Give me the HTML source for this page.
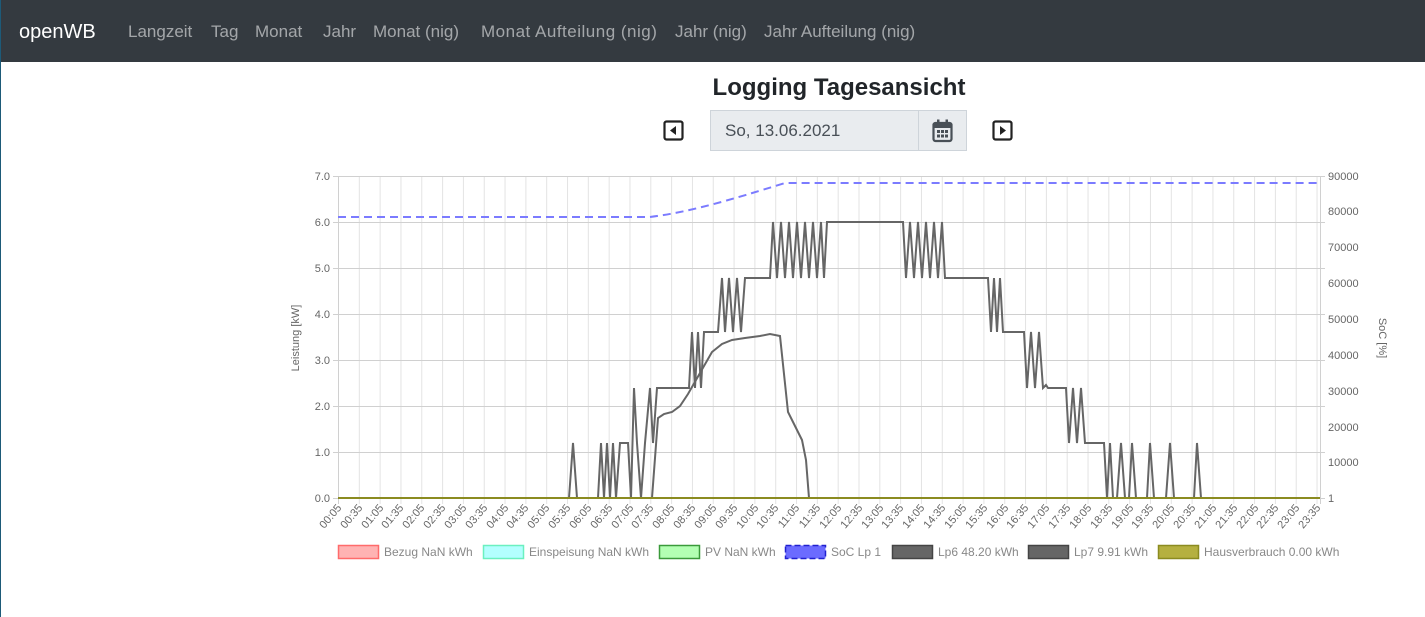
<!DOCTYPE html>
<html><head><meta charset="utf-8"><style>
body{margin:0;width:1425px;height:617px;overflow:hidden;background:#fff;font-family:"Liberation Sans",sans-serif;position:relative}
.lb{position:absolute;left:0;top:0;width:1px;height:617px;background:#1d5a78}
.nav{position:absolute;left:0;top:0;width:1425px;height:62px;background:#343a40}
.nav span{position:absolute;top:22px;font-size:17px;color:rgba(255,255,255,.55)}
.nav .b{font-size:20px;color:#fff;top:21px}
h1{position:absolute;left:0;width:1678px;text-align:center;top:74px;margin:0;font-size:24px;font-weight:bold;color:#212529}
.date{position:absolute;left:710px;top:110px;width:257px;height:41px;box-sizing:border-box;border:1px solid #ced4da;background:#e9ecef}
.date span{position:absolute;left:14px;top:10px;font-size:17px;color:#495057}
.date i{position:absolute;left:207px;top:0;width:1px;height:39px;background:#ced4da}
</style></head><body>
<div class="nav">
<span class="b" style="left:19px">openWB</span>
<span style="left:128px">Langzeit</span><span style="left:211px">Tag</span><span style="left:255px">Monat</span><span style="left:323px">Jahr</span><span style="left:373px">Monat (nig)</span><span style="left:481px;letter-spacing:0.5px">Monat Aufteilung (nig)</span><span style="left:675px">Jahr (nig)</span><span style="left:764px">Jahr Aufteilung (nig)</span>
</div>
<div class="lb"></div>
<h1>Logging Tagesansicht</h1>
<svg style="position:absolute;left:663px;top:120px" width="21" height="21"><rect x="1.5" y="1.5" width="18" height="18" rx="2" fill="none" stroke="#222" stroke-width="2.2"/><path d="M13 6v9l-6-4.5z" fill="#222"/></svg>
<svg style="position:absolute;left:992px;top:120px" width="21" height="21"><rect x="1.5" y="1.5" width="18" height="18" rx="2" fill="none" stroke="#222" stroke-width="2.2"/><path d="M8 6v9l6-4.5z" fill="#222"/></svg>
<div class="date"><span>So, 13.06.2021</span><i></i>
<svg style="position:absolute;left:221px;top:8px" width="21" height="24"><rect x="1.5" y="4" width="18" height="18" rx="2" fill="none" stroke="#495057" stroke-width="2.2"/><rect x="1.5" y="4" width="18" height="5" fill="#495057"/><rect x="5" y="0.5" width="2.5" height="5" fill="#495057"/><rect x="13.5" y="0.5" width="2.5" height="5" fill="#495057"/><g fill="#495057"><rect x="5" y="11" width="3" height="3"/><rect x="9" y="11" width="3" height="3"/><rect x="13" y="11" width="3" height="3"/><rect x="5" y="15.5" width="3" height="3"/><rect x="9" y="15.5" width="3" height="3"/><rect x="13" y="15.5" width="3" height="3"/></g></svg>
</div>
<svg style="position:absolute;left:0;top:0" width="1425" height="617" font-family="Liberation Sans, sans-serif" font-size="11" fill="#666">
<defs><pattern id="vg" x="338" y="0" width="20.82" height="617" patternUnits="userSpaceOnUse"><line x1="0.5" y1="0" x2="0.5" y2="617" stroke="#e3e3e3"/></pattern></defs>
<rect x="338" y="176" width="982" height="328" fill="url(#vg)"/>
<g stroke="#d0d0d0"><line x1="333" y1="176.5" x2="1325" y2="176.5"/><line x1="333" y1="222.5" x2="1325" y2="222.5"/><line x1="333" y1="268.5" x2="1325" y2="268.5"/><line x1="333" y1="314.5" x2="1325" y2="314.5"/><line x1="333" y1="360.5" x2="1325" y2="360.5"/><line x1="333" y1="406.5" x2="1325" y2="406.5"/><line x1="333" y1="452.5" x2="1325" y2="452.5"/><line x1="333" y1="498.5" x2="1325" y2="498.5"/><line x1="338.5" y1="176" x2="338.5" y2="504"/><line x1="1320.5" y1="176" x2="1320.5" y2="504"/></g>
<g text-anchor="end"><text x="330" y="180">7.0</text><text x="330" y="226">6.0</text><text x="330" y="272">5.0</text><text x="330" y="318">4.0</text><text x="330" y="364">3.0</text><text x="330" y="410">2.0</text><text x="330" y="456">1.0</text><text x="330" y="502">0.0</text></g>
<g><text x="1328" y="180">90000</text><text x="1328" y="215">80000</text><text x="1328" y="251">70000</text><text x="1328" y="287">60000</text><text x="1328" y="323">50000</text><text x="1328" y="359">40000</text><text x="1328" y="395">30000</text><text x="1328" y="431">20000</text><text x="1328" y="466">10000</text><text x="1328" y="502">1</text></g>
<text transform="translate(299,338) rotate(-90)" text-anchor="middle">Leistung [kW]</text>
<text transform="translate(1379,338) rotate(90)" text-anchor="middle">SoC [%]</text>
<g text-anchor="end" font-size="11">
<text transform="translate(342,508) rotate(-50)">00:05</text><text transform="translate(363,508) rotate(-50)">00:35</text><text transform="translate(384,508) rotate(-50)">01:05</text><text transform="translate(404,508) rotate(-50)">01:35</text><text transform="translate(425,508) rotate(-50)">02:05</text><text transform="translate(446,508) rotate(-50)">02:35</text><text transform="translate(467,508) rotate(-50)">03:05</text><text transform="translate(488,508) rotate(-50)">03:35</text><text transform="translate(509,508) rotate(-50)">04:05</text><text transform="translate(529,508) rotate(-50)">04:35</text><text transform="translate(550,508) rotate(-50)">05:05</text><text transform="translate(571,508) rotate(-50)">05:35</text><text transform="translate(592,508) rotate(-50)">06:05</text><text transform="translate(613,508) rotate(-50)">06:35</text><text transform="translate(634,508) rotate(-50)">07:05</text><text transform="translate(654,508) rotate(-50)">07:35</text><text transform="translate(675,508) rotate(-50)">08:05</text><text transform="translate(696,508) rotate(-50)">08:35</text><text transform="translate(717,508) rotate(-50)">09:05</text><text transform="translate(738,508) rotate(-50)">09:35</text><text transform="translate(759,508) rotate(-50)">10:05</text><text transform="translate(779,508) rotate(-50)">10:35</text><text transform="translate(800,508) rotate(-50)">11:05</text><text transform="translate(821,508) rotate(-50)">11:35</text><text transform="translate(842,508) rotate(-50)">12:05</text><text transform="translate(863,508) rotate(-50)">12:35</text><text transform="translate(884,508) rotate(-50)">13:05</text><text transform="translate(904,508) rotate(-50)">13:35</text><text transform="translate(925,508) rotate(-50)">14:05</text><text transform="translate(946,508) rotate(-50)">14:35</text><text transform="translate(967,508) rotate(-50)">15:05</text><text transform="translate(988,508) rotate(-50)">15:35</text><text transform="translate(1009,508) rotate(-50)">16:05</text><text transform="translate(1029,508) rotate(-50)">16:35</text><text transform="translate(1050,508) rotate(-50)">17:05</text><text transform="translate(1071,508) rotate(-50)">17:35</text><text transform="translate(1092,508) rotate(-50)">18:05</text><text transform="translate(1113,508) rotate(-50)">18:35</text><text transform="translate(1134,508) rotate(-50)">19:05</text><text transform="translate(1154,508) rotate(-50)">19:35</text><text transform="translate(1175,508) rotate(-50)">20:05</text><text transform="translate(1196,508) rotate(-50)">20:35</text><text transform="translate(1217,508) rotate(-50)">21:05</text><text transform="translate(1238,508) rotate(-50)">21:35</text><text transform="translate(1259,508) rotate(-50)">22:05</text><text transform="translate(1279,508) rotate(-50)">22:35</text><text transform="translate(1300,508) rotate(-50)">23:05</text><text transform="translate(1321,508) rotate(-50)">23:35</text>
</g>
<path d="M338 217H650C690 212 730 200 785 183H1320" fill="none" stroke="#7b7bff" stroke-width="2" stroke-dasharray="8,5"/>
<path d="M338 498H652L658 418L664 414L672 412L680 406L688 394L696 380L704 366L712 352L722 344L732 340L745 338L760 336L770 334L780 336L788 412L796 428L802 440L806 460L809 498H1320" fill="none" stroke="#666" stroke-width="2"/>
<path d="M338 498H569L573 443L577 498H598L601 443L604 498L607 443L610 498L613 443L616 498L620 443H628L631 498L634 388L637 443L641 498L645 443L650 388L653 443L657 388H685L689 388L692 332L695 388L698 332L701 388L704 332H718L722 278L725 332L729 278L733 332L737 278L741 332L745 278H770L773 222L777 278L781 222L785 278L789 222L793 278L797 222L801 278L805 222L809 278L813 222L817 278L821 222L824 278L827 222H903L906 278L910 222L914 278L918 222L922 278L926 222L930 278L934 222L938 278L942 222L945 278H986L988 278L991 332L994 278L997 332L1000 278L1003 332H1020L1024 332L1027 388L1031 332L1035 388L1039 332L1043 388L1046 385L1048 388H1062L1066 388L1069 443L1073 388L1077 443L1081 388L1085 443L1088 443H1104L1107 498L1110 443L1113 498L1117 498L1121 443L1125 498L1129 498L1132 443L1136 498L1147 498L1150 443L1154 498L1166 498L1170 443L1174 498L1194 498L1197 443L1201 498H1320" fill="none" stroke="#666" stroke-width="2"/>
<line x1="338" y1="498" x2="1320" y2="498" stroke="#8b8b20" stroke-width="2"/>
<g font-size="12" fill="#888">
<rect x="338.5" y="545.5" width="40" height="13" fill="#ffb3b3" stroke="#ff6b6b" stroke-width="1.5"/><text x="384" y="556">Bezug NaN kWh</text>
<rect x="483.5" y="545.5" width="40" height="13" fill="#b3ffff" stroke="#6bf0c0" stroke-width="1.5"/><text x="529" y="556">Einspeisung NaN kWh</text>
<rect x="659.5" y="545.5" width="40" height="13" fill="#b3ffb3" stroke="#3a9a3a" stroke-width="1.5"/><text x="705" y="556">PV NaN kWh</text>
<rect x="785.5" y="545.5" width="40" height="13" fill="#6b6bff" stroke="#2020d0" stroke-width="1.5" stroke-dasharray="6,3"/><text x="831" y="556">SoC Lp 1</text>
<rect x="892.5" y="545.5" width="40" height="13" fill="#666" stroke="#444" stroke-width="1.5"/><text x="938" y="556">Lp6 48.20 kWh</text>
<rect x="1028.5" y="545.5" width="40" height="13" fill="#666" stroke="#444" stroke-width="1.5"/><text x="1074" y="556">Lp7 9.91 kWh</text>
<rect x="1158.5" y="545.5" width="40" height="13" fill="#b5b040" stroke="#8b8b20" stroke-width="1.5"/><text x="1204" y="556">Hausverbrauch 0.00 kWh</text>
</g>
</svg>
</body></html>
